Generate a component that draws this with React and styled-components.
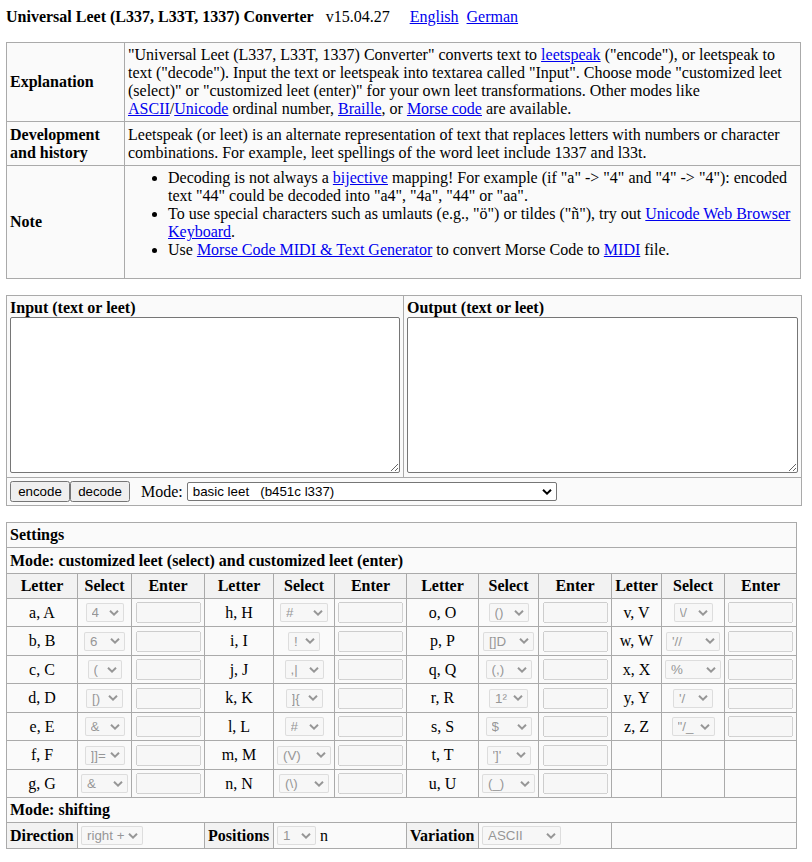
import React from "react";
import styled, { createGlobalStyle } from "styled-components";

const GlobalStyle = createGlobalStyle`
  body {
    margin: 0;
    background: #fff;
    color: #000;
    font: 16px/18px "Liberation Serif", "Times New Roman", serif;
  }
  a { color: #0000ee; text-decoration: underline; }
`;

const Page = styled.main`
  padding: 8px 10px 8px 6px;
`;

const TitleBar = styled.header`
  display: flex;
  align-items: baseline;
  gap: 12px;
  margin-bottom: 16px;
`;

const Title = styled.h1`
  margin: 0;
  font-size: 16px;
  line-height: 18px;
`;

const Languages = styled.nav`
  display: flex;
  gap: 8px;
  margin-left: 8px;
`;

const Table = styled.table`
  width: calc(100% - ${(p) => p.$inset || 0}px);
  margin-bottom: 16px;
  border-collapse: collapse;
  table-layout: fixed;
  background: #fafafa;
`;

const Col = styled.col`
  width: ${(p) => (p.$width ? `${p.$width}px` : "auto")};
`;

const Row = styled.tr`
  height: ${(p) => (p.$height ? `${p.$height}px` : "auto")};
`;

const Cell = styled.td`
  padding: 3px;
  border: 1px solid #aaa;
  text-align: ${(p) => (p.$center ? "center" : "left")};
`;

const AreaCell = styled(Cell)`
  padding-bottom: 4px;
  vertical-align: top;
`;

const Heading = styled.th`
  padding: 3px;
  border: 1px solid #aaa;
  text-align: ${(p) => (p.$center ? "center" : "left")};
  background: ${(p) => (p.$shaded ? "#f2f2f2" : "transparent")};
`;

const SectionHeading = styled(Heading)`
  height: 19px;
`;

const NoteList = styled.ul`
  margin: 0 0 16px;
  padding-left: 40px;
`;

const AreaLabel = styled.label`
  display: block;
  font-weight: bold;
`;

const TextArea = styled.textarea`
  display: block;
  box-sizing: border-box;
  width: 100%;
  height: 156px;
  margin: 0;
  border: 1px solid #767676;
  border-radius: 2px;
  background: #fff;
`;

const Controls = styled.div`
  display: flex;
  align-items: center;
`;

const Button = styled.button`
  box-sizing: border-box;
  width: 60px;
  height: 21px;
  padding: 0;
  font-family: "Liberation Sans", Arial, sans-serif;
`;

const ModeLabel = styled.label`
  margin: 0 4px 0 11px;
`;

const CHEVRON =
  "data:image/svg+xml,%3Csvg xmlns='http://www.w3.org/2000/svg' width='10' height='6' viewBox='0 0 10 6'%3E%3Cpath d='M1 .8 5 4.6 9 .8' fill='none' stroke='%23000' stroke-width='2'/%3E%3C/svg%3E";
const CHEVRON_MUTED = CHEVRON.replace("%23000", "%236d6d6d");

const Select = styled.select`
  appearance: none;
  box-sizing: border-box;
  width: ${(p) => p.$width}px;
  height: 19px;
  margin: 0;
  padding: 0 0 0 5px;
  border: 1px solid #767676;
  border-radius: 2px;
  background: #fff url("${CHEVRON}") no-repeat right 4px center;
  color: #000;
  font-family: "Liberation Sans", Arial, sans-serif;

  &:disabled {
    opacity: 0.7;
    border-color: rgba(118, 118, 118, 0.3);
    background-color: rgba(239, 239, 239, 0.3);
    background-image: url("${CHEVRON_MUTED}");
    color: #6d6d6d;
  }
`;

const Inline = styled.div`
  display: flex;
  align-items: center;
  gap: 4px;
`;

const CenteredControl = styled.div`
  display: flex;
  justify-content: center;
`;

const Entry = styled.input`
  box-sizing: border-box;
  width: 65px;
  height: 21px;
  margin: 0;
  font-family: "Liberation Sans", Arial, sans-serif;
`;

const COLUMN_WIDTHS = [71, 54, 73, 69, 61, 72, 72, 60, 73, 50, 63, 72];

const LETTERS = {
  a: ["4", 38], b: ["6", 41], c: ["(", 34], d: ["[)", 37], e: ["&", 40],
  f: ["]]=", 40], g: ["&", 47], h: ["#", 48], i: ["!", 32], j: [",|", 39],
  k: ["]{", 37], l: ["#", 39], m: ["(V)", 54], n: ["(\\)", 50], o: ["()", 40],
  p: ["[]D", 51], q: ["(,)", 46], r: ["1²", 39], s: ["$", 46], t: ["']'", 44],
  u: ["(_)", 53], v: ["\\/", 39], w: ["'//", 54], x: ["%", 56], y: ["'/", 40],
  z: ["\"/_", 43],
};

const ROWS = ["ahov", "bipw", "cjqx", "dkry", "elsz", "fmt", "gnu"];

function LetterCells({ letter }) {
  if (!letter) {
    return (
      <>
        <Cell />
        <Cell />
        <Cell />
      </>
    );
  }
  const [value, width] = LETTERS[letter];
  const upper = letter.toUpperCase();
  return (
    <>
      <Cell $center>{`${letter}, ${upper}`}</Cell>
      <Cell $center>
        <CenteredControl>
          <Select $width={width} disabled aria-label={`Select ${upper}`}>
            <option>{value}</option>
          </Select>
        </CenteredControl>
      </Cell>
      <Cell $center>
        <CenteredControl>
          <Entry type="text" disabled aria-label={`Enter ${upper}`} />
        </CenteredControl>
      </Cell>
    </>
  );
}

export default function App() {
  return (
    <Page>
      <GlobalStyle />
      <TitleBar>
        <Title>Universal Leet (L337, L33T, 1337) Converter</Title>
        <span>v15.04.27</span>
        <Languages>
          <a href="#en">English</a>
          <a href="#de">German</a>
        </Languages>
      </TitleBar>

      <Table $inset={1}>
        <colgroup>
          <Col $width={118} />
          <Col />
        </colgroup>
        <tbody>
          <tr>
            <Heading scope="row">Explanation</Heading>
            <Cell>
              "Universal Leet (L337, L33T, 1337) Converter" converts text to{" "}
              <a href="#leetspeak">leetspeak</a> ("encode"), or leetspeak to text
              ("decode"). Input the text or leetspeak into textarea called
              "Input". Choose mode "customized leet (select)" or "customized
              leet (enter)" for your own leet transformations. Other modes like{" "}
              <a href="#ascii">ASCII</a>/<a href="#unicode">Unicode</a> ordinal
              number, <a href="#braille">Braille</a>, or{" "}
              <a href="#morse">Morse code</a> are available.
            </Cell>
          </tr>
          <Row $height={44}>
            <Heading scope="row">Development and history</Heading>
            <Cell>
              Leetspeak (or leet) is an alternate representation of text that
              replaces letters with numbers or character combinations. For
              example, leet spellings of the word leet include 1337 and l33t.
            </Cell>
          </Row>
          <tr>
            <Heading scope="row">Note</Heading>
            <Cell>
              <NoteList>
                <li>
                  Decoding is not always a <a href="#bijective">bijective</a>{" "}
                  mapping! For example (if "a" -&gt; "4" and "4" -&gt; "4"):
                  encoded text "44" could be decoded into "a4", "4a", "44" or
                  "aa".
                </li>
                <li>
                  To use special characters such as umlauts (e.g., "ö") or
                  tildes ("ñ"), try out{" "}
                  <a href="#keyboard">Unicode Web Browser Keyboard</a>.
                </li>
                <li>
                  Use <a href="#generator">Morse Code MIDI &amp; Text Generator</a>{" "}
                  to convert Morse Code to <a href="#midi">MIDI</a> file.
                </li>
              </NoteList>
            </Cell>
          </tr>
        </tbody>
      </Table>

      <Table>
        <colgroup>
          <Col $width={397} />
          <Col $width={398} />
        </colgroup>
        <tbody>
          <tr>
            <AreaCell>
              <AreaLabel htmlFor="input">Input (text or leet)</AreaLabel>
              <TextArea id="input" />
            </AreaCell>
            <AreaCell>
              <AreaLabel htmlFor="output">Output (text or leet)</AreaLabel>
              <TextArea id="output" />
            </AreaCell>
          </tr>
          <tr>
            <Cell colSpan={2}>
              <Controls>
                <Button type="button">encode</Button>
                <Button type="button">decode</Button>
                <ModeLabel htmlFor="mode">Mode:</ModeLabel>
                <Select id="mode" $width={370}>
                  <option>{"basic leet \u00a0 (b451c l337)"}</option>
                </Select>
              </Controls>
            </Cell>
          </tr>
        </tbody>
      </Table>

      <Table $inset={5}>
        <colgroup>
          {COLUMN_WIDTHS.map((width, i) => (
            <Col key={i} $width={width} />
          ))}
        </colgroup>
        <tbody>
          <tr>
            <Heading colSpan={12}>Settings</Heading>
          </tr>
          <tr>
            <SectionHeading colSpan={12}>
              Mode: customized leet (select) and customized leet (enter)
            </SectionHeading>
          </tr>
          <tr>
            {[0, 1, 2, 3].map((group) => (
              <React.Fragment key={group}>
                <Heading $center $shaded>Letter</Heading>
                <Heading $center $shaded>Select</Heading>
                <Heading $center $shaded>Enter</Heading>
              </React.Fragment>
            ))}
          </tr>
          {ROWS.map((row, i) => (
            <Row key={row} $height={i % 2 === 1 ? 29 : 28}>
              {[0, 1, 2, 3].map((group) => (
                <LetterCells key={group} letter={row[group]} />
              ))}
            </Row>
          ))}
          <tr>
            <Heading colSpan={12}>Mode: shifting</Heading>
          </tr>
          <tr>
            <Heading $shaded scope="row">
              <label htmlFor="direction">Direction</label>
            </Heading>
            <Cell colSpan={2}>
              <Inline>
                <Select id="direction" $width={62} disabled>
                  <option>right +</option>
                </Select>
              </Inline>
            </Cell>
            <Heading $shaded scope="row">
              <label htmlFor="positions">Positions</label>
            </Heading>
            <Cell colSpan={2}>
              <Inline>
                <Select id="positions" $width={39} disabled>
                  <option>1</option>
                </Select>
                <span>n</span>
              </Inline>
            </Cell>
            <Heading $shaded scope="row">
              <label htmlFor="variation">Variation</label>
            </Heading>
            <Cell colSpan={2}>
              <Inline>
                <Select id="variation" $width={79} disabled>
                  <option>ASCII</option>
                </Select>
              </Inline>
            </Cell>
            <Cell colSpan={3} />
          </tr>
        </tbody>
      </Table>
    </Page>
  );
}
